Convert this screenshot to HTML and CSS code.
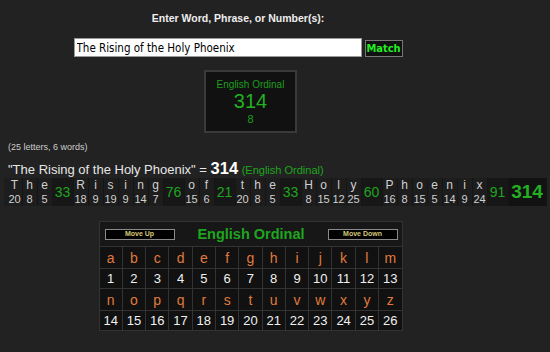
FILE: index.html
```html
<!DOCTYPE html>
<html lang="en">

<head>
    <meta charset="UTF-8">
    <title>Gematria Calculator</title>
    <link rel="stylesheet" href="styles.css">
</head>

<body>
    <div class="top">
        <div class="prompt">Enter Word, Phrase, or Number(s):</div>

        <!-- Entrada de la frase -->
        <div class="entry">
            <input type="text" class="phrase-input" value="The Rising of the Holy Phoenix">
            <button class="match">Match</button>
        </div>
    </div>

    <!-- Resultado del cifrado -->
    <div class="main">
        <div class="cipher-box">
            <div class="cipher-name">English Ordinal</div>
            <div class="cipher-value">314</div>
            <div class="cipher-reduced">8</div>
        </div>
    </div>

    <div class="counts">(25 letters, 6 words)</div>
    <div class="phrase">"The Rising of the Holy Phoenix" = <b>314</b> <span class="phrase-cipher">(English Ordinal)</span></div>

    <!-- Desglose letra por letra -->
    <table class="breakdown">
        <tr>
            <td class="first">T</td><td>h</td><td>e</td><td class="word-sum" rowspan="2">33</td>
            <td>R</td><td>i</td><td>s</td><td>i</td><td>n</td><td>g</td><td class="word-sum" rowspan="2">76</td>
            <td>o</td><td>f</td><td class="word-sum" rowspan="2">21</td>
            <td>t</td><td>h</td><td>e</td><td class="word-sum" rowspan="2">33</td>
            <td>H</td><td>o</td><td>l</td><td>y</td><td class="word-sum" rowspan="2">60</td>
            <td>P</td><td>h</td><td>o</td><td>e</td><td>n</td><td>i</td><td>x</td><td class="word-sum" rowspan="2">91</td>
            <td class="total" rowspan="2">314</td>
        </tr>
        <tr class="values">
            <td class="first">20</td><td>8</td><td>5</td>
            <td>18</td><td>9</td><td>19</td><td>9</td><td>14</td><td>7</td>
            <td>15</td><td>6</td>
            <td>20</td><td>8</td><td>5</td>
            <td>8</td><td>15</td><td>12</td><td>25</td>
            <td>16</td><td>8</td><td>15</td><td>5</td><td>14</td><td>9</td><td>24</td>
        </tr>
    </table>

    <!-- Tabla del cifrado -->
    <div class="main">
        <table class="chart">
            <tr>
                <td class="chart-head" colspan="13">
                    <div class="chart-bar">
                        <button class="move">Move Up</button>
                        <span class="chart-title">English Ordinal</span>
                        <button class="move">Move Down</button>
                    </div>
                </td>
            </tr>
            <tr class="letters">
                <td>a</td><td>b</td><td>c</td><td>d</td><td>e</td><td>f</td><td>g</td><td>h</td><td>i</td><td>j</td><td>k</td><td>l</td><td>m</td>
            </tr>
            <tr class="numbers">
                <td>1</td><td>2</td><td>3</td><td>4</td><td>5</td><td>6</td><td>7</td><td>8</td><td>9</td><td>10</td><td>11</td><td>12</td><td>13</td>
            </tr>
            <tr class="letters">
                <td>n</td><td>o</td><td>p</td><td>q</td><td>r</td><td>s</td><td>t</td><td>u</td><td>v</td><td>w</td><td>x</td><td>y</td><td>z</td>
            </tr>
            <tr class="numbers">
                <td>14</td><td>15</td><td>16</td><td>17</td><td>18</td><td>19</td><td>20</td><td>21</td><td>22</td><td>23</td><td>24</td><td>25</td><td>26</td>
            </tr>
        </table>
    </div>
</body>

</html>
```

FILE: styles.css
```css
body {
    font-family: "Liberation Sans", Arial, sans-serif;
    background-color: #222222;
    color: #d0d0d0;
    margin: 0;
    padding: 0;
}

/* Cabecera y entrada */
.top {
    padding-right: 74px;
}

.prompt {
    text-align: center;
    font-size: 10.5px;
    font-weight: bold;
    color: #eeeeee;
    padding-top: 12px;
    height: 26px;
}

.entry {
    display: flex;
    justify-content: center;
    align-items: flex-end;
    gap: 3px;
}

.phrase-input {
    width: 288px;
    height: 19px;
    box-sizing: border-box;
    margin: 0;
    padding: 0 2px;
    border: 1px solid #999;
    background-color: #fff;
    color: #000;
    font-family: "DejaVu Sans Condensed", "Liberation Sans", sans-serif;
    font-size: 11.5px;
}

.match {
    width: 38px;
    height: 17px;
    margin: 0;
    padding: 0;
    background-color: #111;
    border: 1px solid #777;
    color: #22ee22;
    font-family: "DejaVu Sans Condensed", "Liberation Sans", sans-serif;
    font-weight: bold;
    font-size: 11px;
}

.main {
    padding-right: 49px;
}

.cipher-box {
    width: 89px;
    height: 59px;
    margin: 13px auto 0;
    background-color: #111;
    border: 2px solid #3a3a3a;
    text-align: center;
    color: #1e9e1e;
}

.cipher-name {
    font-size: 10px;
    margin-top: 7px;
}

.cipher-value {
    font-size: 20px;
    line-height: 23px;
    color: #22b022;
}

.cipher-reduced {
    font-size: 11px;
    line-height: 13px;
}

.counts {
    font-size: 9px;
    color: #cccccc;
    padding: 9px 8px 0;
    height: 13px;
}

.phrase {
    font-size: 13px;
    color: #e6e6e6;
    padding: 4px 8px 0;
    height: 15px;
}

.phrase b {
    font-size: 16.5px;
    color: #fff;
}

.phrase-cipher {
    font-size: 11px;
    color: #1fa51f;
}

/* Desglose */
.breakdown {
    margin: 4px auto 0;
    border-collapse: collapse;
    background-color: #171717;
    font-size: 12px;
}

.breakdown td {
    background-color: #1d1d1d;
    border-right: 1px solid #151515;
    text-align: center;
    padding: 0;
    min-width: 14px;
    width: 14px;
    height: 14px;
    line-height: 14px;
    color: #d0d0d0;
}

.breakdown .first {
    padding-left: 4px;
}

.breakdown .values td {
    font-size: 11px;
}

.breakdown .word-sum {
    background-color: #171717;
    color: #1fa51f;
    font-size: 14px;
    width: 20px;
}

.breakdown .total {
    background-color: #121212;
    color: #22b022;
    font-size: 19px;
    font-weight: bold;
    width: 37px;
}

/* Tabla del cifrado */
.chart {
    width: 304px;
    table-layout: fixed;
    margin: 15px auto 0;
    border-collapse: collapse;
    background-color: #111;
    border: 1px solid #363636;
}

.chart td {
    border: 1px solid #333;
    text-align: center;
    padding: 0;
}

.chart .chart-head {
    height: 24px;
    background-color: #171717;
}

.chart-bar {
    display: flex;
    justify-content: space-between;
    align-items: center;
    padding: 0 4px 0 5px;
}

.move {
    width: 70px;
    height: 11px;
    margin: 0;
    padding: 0;
    background-color: #000;
    border: 1px solid #8a8a8a;
    color: #d4c978;
    font-family: "Liberation Sans", Arial, sans-serif;
    font-size: 7px;
    font-weight: bold;
    line-height: 8px;
}

.chart-title {
    font-size: 14.5px;
    font-weight: bold;
    color: #1fa51f;
}

.chart .letters td {
    height: 21px;
    font-size: 14px;
    color: #e07a3c;
}

.chart .numbers td {
    height: 19px;
    font-size: 13px;
    color: #f0f0f0;
}
```
